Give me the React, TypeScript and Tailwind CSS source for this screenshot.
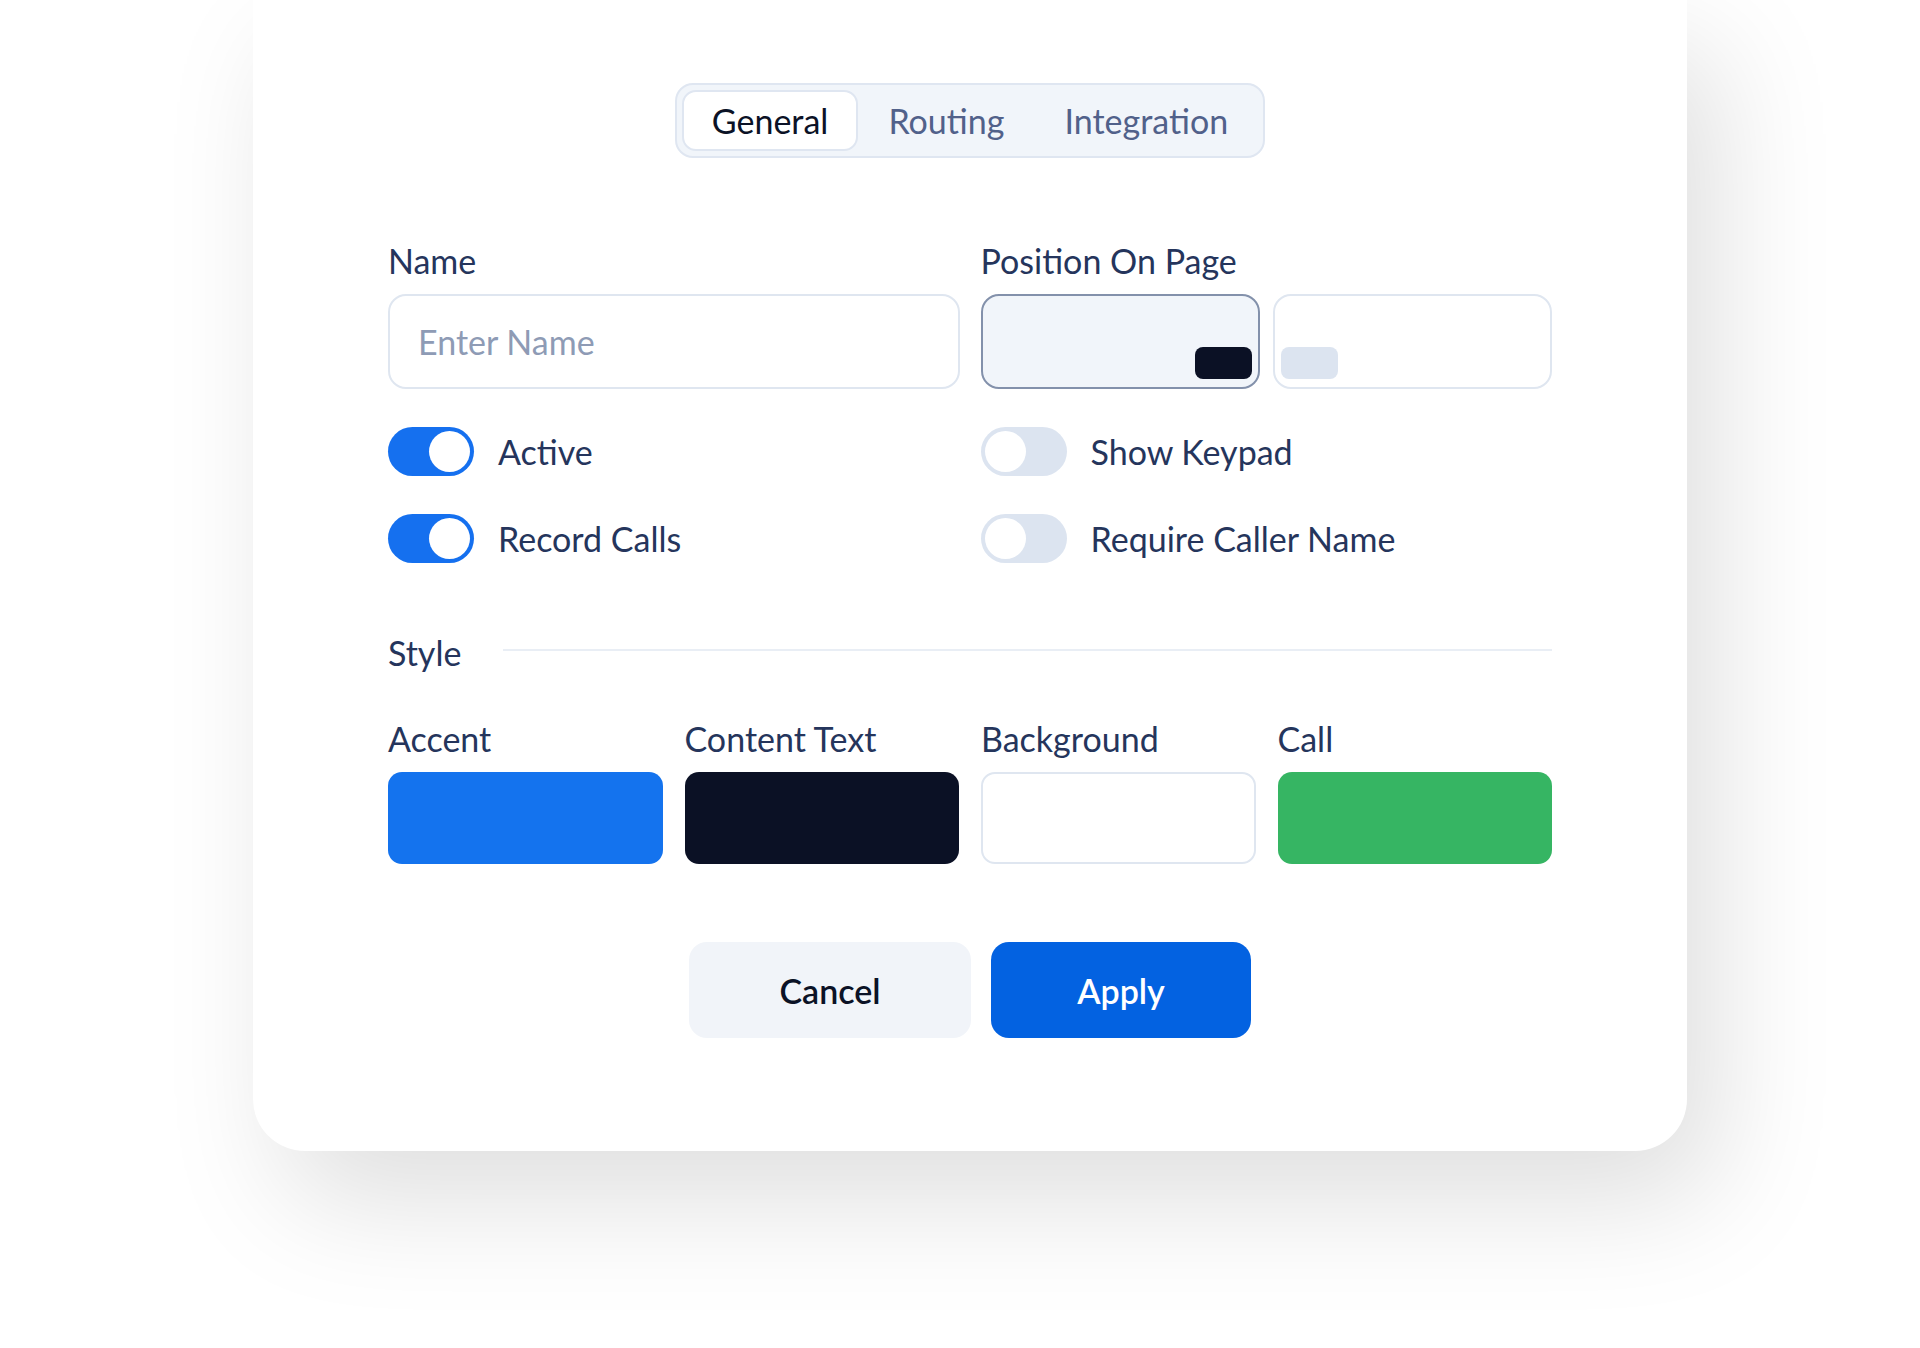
import { useState } from "react";

const TABS = ["General", "Routing", "Integration"];

const SWATCHES = [
    { label: "Accent", className: "bg-[#1473ee]" },
    { label: "Content Text", className: "bg-[#0b1125]" },
    { label: "Background", className: "bg-white border-2 border-[#dfe6f0]" },
    { label: "Call", className: "bg-[#36b563]" },
];

const Toggle = ({ on, label }: { on: boolean; label: string }) => {
    return (
        <div className="flex items-center gap-[24px]">
            <div
                className={
                    on
                        ? "flex items-center justify-end w-[86px] h-[49px] rounded-full bg-[#1570ef] px-[4px]"
                        : "flex items-center justify-start w-[86px] h-[49px] rounded-full bg-[#dce4f0] px-[4px]"
                }
            >
                <div className="w-[41px] h-[41px] rounded-full bg-white" />
            </div>
            <span className="text-[34px] leading-[40px] text-[#25355c]">{label}</span>
        </div>
    );
};

const App = () => {

    const [tab, setTab] = useState("General");

    return (
        <div
            className="w-full h-[1348px] bg-white overflow-hidden"
            style={{ fontFamily: "Lato, 'Noto Sans', sans-serif" }}
        >
            <div className="ml-[253px] w-[1434px] bg-white rounded-b-[52px] pt-[83px] pb-[113px] px-[135px] shadow-[30px_50px_120px_rgba(0,0,0,0.13)]">

                <div className="flex justify-center">
                    <div className="flex h-[75px] p-[5px] rounded-[18px] border-2 border-[#dfe6f1] bg-[#f1f5fa]">
                        {TABS.map((item) => (
                            <button
                                key={item}
                                onClick={() => setTab(item)}
                                className={
                                    tab === item
                                        ? "px-[28px] rounded-[14px] bg-white border-2 border-[#dfe6f1] text-[34px] text-[#0b1226]"
                                        : "px-[28px] rounded-[14px] border-2 border-transparent text-[34px] text-[#51618a]"
                                }
                            >
                                {item}
                            </button>
                        ))}
                    </div>
                </div>

                <div className="mt-[83px] grid grid-cols-2 gap-x-[21px]">
                    <div>
                        <div className="text-[34px] leading-[40px] text-[#25355c]">Name</div>
                        <div className="mt-[13px] h-[95px] rounded-[18px] border-2 border-[#dfe6f0] flex items-center px-[28px]">
                            <span className="text-[34px] text-[#8e9bb5]">Enter Name</span>
                        </div>
                    </div>
                    <div>
                        <div className="text-[34px] leading-[40px] text-[#25355c]">Position On Page</div>
                        <div className="mt-[13px] grid grid-cols-2 gap-[13px]">
                            <div className="h-[95px] rounded-[18px] border-2 border-[#8391ab] bg-[#f1f5fa] flex items-end justify-end pr-[6px] pb-[8px]">
                                <div className="w-[57px] h-[32px] rounded-[8px] bg-[#0b1125]" />
                            </div>
                            <div className="h-[95px] rounded-[18px] border-2 border-[#dfe6f0] bg-white flex items-end justify-start pl-[6px] pb-[8px]">
                                <div className="w-[57px] h-[32px] rounded-[8px] bg-[#dce4f0]" />
                            </div>
                        </div>
                    </div>
                </div>

                <div className="mt-[38px] grid grid-cols-2 gap-x-[21px] gap-y-[38px]">
                    <Toggle on={true} label="Active" />
                    <Toggle on={false} label="Show Keypad" />
                    <Toggle on={true} label="Record Calls" />
                    <Toggle on={false} label="Require Caller Name" />
                </div>

                <div className="mt-[70px] flex items-center gap-[42px]">
                    <span className="text-[34px] leading-[40px] text-[#25355c]">Style</span>
                    <div className="flex-1 h-[2px] bg-[#e9eef5] -mt-[6px]" />
                </div>

                <div className="mt-[46px] grid grid-cols-4 gap-[22px]">
                    {SWATCHES.map((item) => (
                        <div key={item.label}>
                            <div className="text-[34px] leading-[40px] text-[#25355c]">{item.label}</div>
                            <div className={"mt-[13px] h-[92px] rounded-[14px] " + item.className} />
                        </div>
                    ))}
                </div>

                <div className="mt-[78px] flex justify-center gap-[20px]">
                    <button className="w-[282px] h-[96px] rounded-[18px] bg-[#f1f4f9] text-[34px] font-semibold text-[#0b1226]">
                        Cancel
                    </button>
                    <button className="w-[260px] h-[96px] rounded-[18px] bg-[#0362e1] text-[34px] font-semibold text-white">
                        Apply
                    </button>
                </div>
            </div>
        </div>
    );
};

export default App;
